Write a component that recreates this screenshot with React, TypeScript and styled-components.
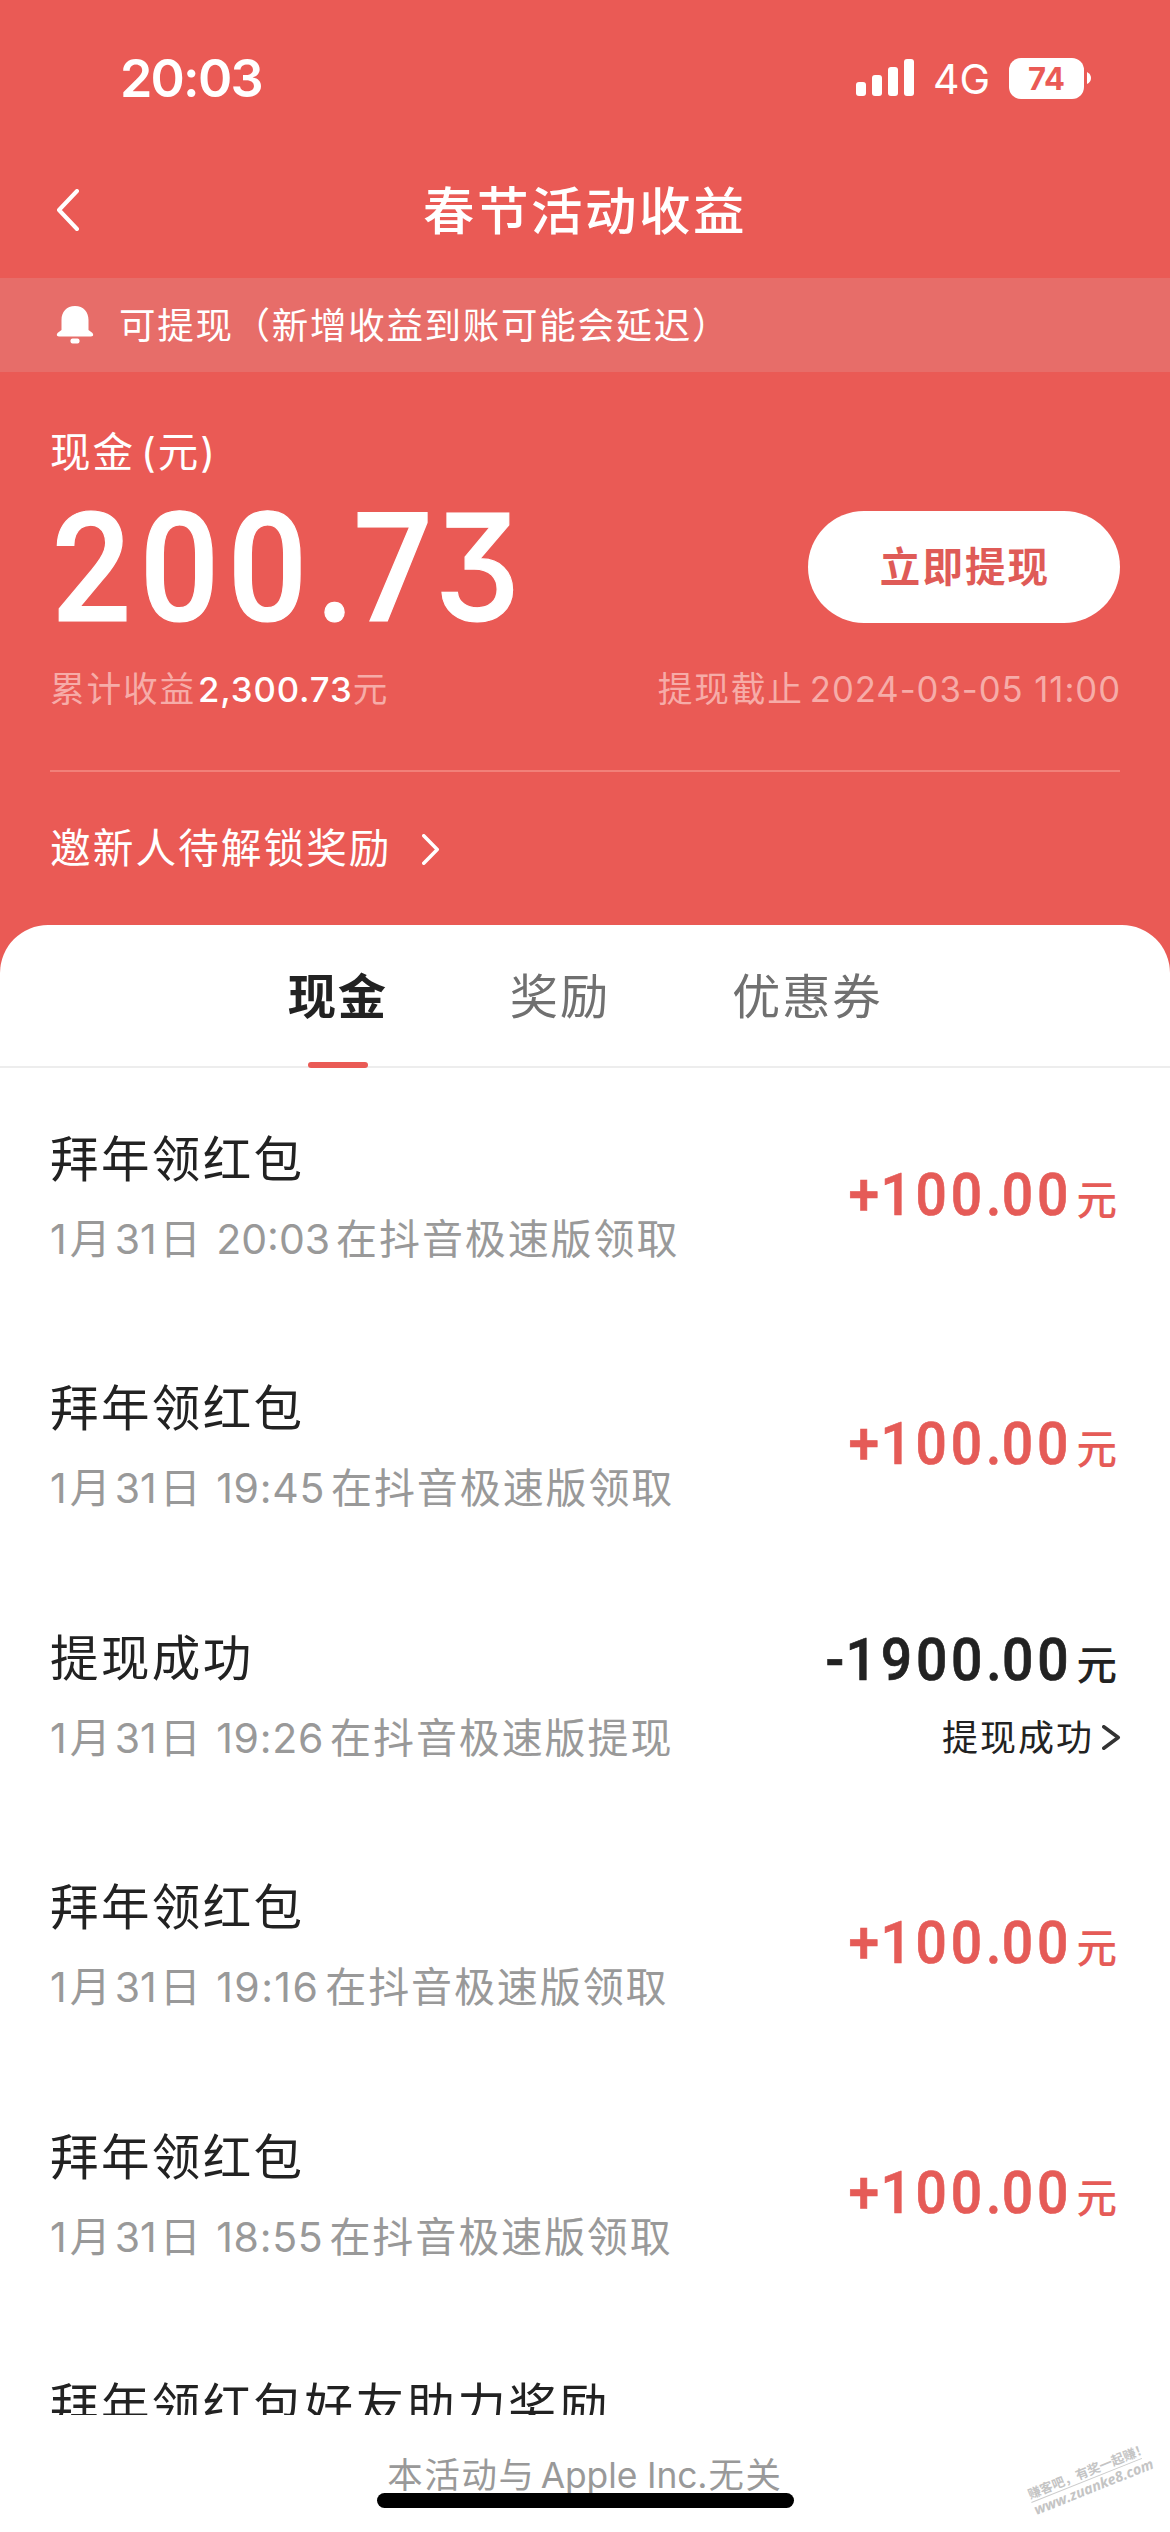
import React from "react";
import styled, { createGlobalStyle, css } from "styled-components";

const RED = "#ea5a55";
const TEXT_FONT = `Inter, "Noto Sans CJK SC", sans-serif`;
const NUM_FONT = `Roboto, "Noto Sans CJK SC", sans-serif`;

const GlobalStyle = createGlobalStyle`
  * { box-sizing: border-box; }
  body { margin: 0; background: ${RED}; font-family: ${TEXT_FONT}; }
`;

const Screen = styled.div`
  width: 1170px;
  height: 2532px;
  display: flex;
  flex-direction: column;
  overflow: hidden;
  background: ${RED};
  color: #fff;
  white-space: nowrap;
`;

const StatusBar = styled.header`
  height: 156px;
  flex: none;
  display: flex;
  align-items: center;
  justify-content: space-between;
  padding: 0 79px 0 120px;
`;

const Clock = styled.div`
  font-size: 52px;
  font-weight: 600;
  line-height: 60px;
  letter-spacing: -1.8px;
  padding-top: 1px;
`;

const StatusIcons = styled.div`
  display: flex;
  align-items: center;
`;

const Network = styled.span`
  font-size: 41px;
  line-height: 48px;
  margin: 2px 19px 0 18px;
`;

const Battery = styled.div`
  width: 75px;
  height: 41px;
  border-radius: 12px;
  background: #fff;
  color: ${RED};
  font-size: 31px;
  font-weight: 700;
  line-height: 42px;
  text-align: center;
`;

const NavBar = styled.nav`
  height: 122px;
  flex: none;
  display: grid;
  grid-template-columns: 1fr auto 1fr;
  align-items: center;
  padding: 0 56px 14px;
`;

const NavTitle = styled.h1`
  margin: 0;
  padding-top: 2px;
  font-size: 51.5px;
  font-weight: 500;
  line-height: 70px;
  letter-spacing: 2.5px;
`;

const Notice = styled.div`
  height: 94px;
  flex: none;
  display: flex;
  align-items: center;
  gap: 25px;
  padding-left: 56px;
  background: #e76d69;
  font-size: 36.5px;
  letter-spacing: 1.7px;
`;

const NoticeText = styled.span`
  padding-bottom: 4px;
`;

const Summary = styled.section`
  flex: none;
  height: 553px;
  padding: 56px 50px 0;
  display: flex;
  flex-direction: column;
`;

const Label = styled.div`
  font-size: 40.5px;
  line-height: 50px;
  letter-spacing: 2px;
`;

const Paren = styled.span`
  margin-left: ${(p: { $gap?: number }) => p.$gap ?? 0}px;
`;

const BalanceRow = styled.div`
  display: flex;
  align-items: center;
  justify-content: space-between;
  height: 112px;
  margin-top: 33px;
`;

const Balance = styled.div`
  padding: 4px 0 0 2px;
  font-family: ${NUM_FONT};
  font-size: 152px;
  font-weight: 500;
  -webkit-text-stroke: 1.2px #fff;
  line-height: 112px;
  letter-spacing: 9.2px;
  transform: scaleX(0.92);
  transform-origin: left center;
`;

const Dot = styled.span`
  letter-spacing: -1px;
`;

const FlatThree = styled.span`
  font-family: Inter, sans-serif;
  font-size: 148.5px;
  font-weight: 500;
  line-height: 1px;
  letter-spacing: 0;
  margin-left: -8px;
  font-feature-settings: "cv09";
`;

const WithdrawButton = styled.button`
  width: 312px;
  height: 112px;
  border: 0;
  border-radius: 56px;
  padding: 2px 0 0 2px;
  background: #fff;
  color: #df5b57;
  font: 700 40.5px/60px ${TEXT_FONT};
  letter-spacing: 2.1px;
`;

const MetaRow = styled.div`
  display: flex;
  justify-content: space-between;
  margin-top: 41px;
  font-size: 34.7px;
  line-height: 50px;
  letter-spacing: 1.8px;
  color: #f6aca8;
`;

const Total = styled.b`
  margin-left: 2px;
  color: #fff;
  font-weight: 500;
  letter-spacing: 0.9px;
`;

const Deadline = styled.span`
  margin: 0 -1px 0 6px;
  letter-spacing: 0.95px;
`;

const Rule = styled.hr`
  width: 100%;
  height: 2px;
  margin: 56px 0 0;
  border: 0;
  background: #f18079;
`;

const InviteLink = styled.a`
  display: flex;
  align-items: center;
  gap: 30px;
  margin-top: 46px;
  font-size: 40.7px;
  line-height: 62px;
  letter-spacing: 2px;
`;

const Card = styled.main`
  flex: 1;
  min-height: 0;
  display: flex;
  flex-direction: column;
  border-radius: 48px 48px 0 0;
  background: #fff;
  color: #222;
`;

const Tabs = styled.div`
  height: 143px;
  flex: none;
  display: flex;
  justify-content: center;
  gap: 122px;
  border-bottom: 2px solid #ededed;
`;

const Tab = styled.div<{ $active?: boolean }>`
  position: relative;
  height: 143px;
  padding-top: 37px;
  font-size: 48.3px;
  line-height: 70px;
  letter-spacing: 1.8px;
  color: #707070;
  ${(p) =>
    p.$active &&
    css`
      color: #222;
      font-weight: 700;
      &::after {
        content: "";
        position: absolute;
        left: 20px;
        bottom: 0;
        width: 60px;
        height: 6px;
        border-radius: 3px;
        background: ${RED};
      }
    `}
`;

const List = styled.ul`
  margin: 0;
  padding: 0;
  list-style: none;
  height: 1347px;
  overflow: hidden;
`;

const Item = styled.li`
  height: 249.5px;
  display: flex;
  justify-content: space-between;
  padding: 56.5px 53px 0 50px;
`;

const ItemTitle = styled.div`
  font-size: 48.5px;
  line-height: 70px;
  letter-spacing: 2.4px;
`;

const ItemDate = styled.div`
  margin-top: 14px;
  font-size: 41px;
  line-height: 60px;
  letter-spacing: 1.9px;
  color: #999;
`;

const Stamp = styled.span`
  letter-spacing: 0;
  margin-right: 6px;
`;

const DateUnit = styled.span`
  margin: 0 4px 0 3px;
`;

/* Inter's "1" is narrow, so times that contain it get wider tracking. */
const Time = styled.span<{ $ones: number }>`
  letter-spacing: ${(p) => p.$ones * 0.7}px;
`;

const AmountBox = styled.div<{ $detailed?: boolean }>`
  display: flex;
  flex-direction: column;
  align-items: flex-end;
  padding-top: ${(p) => (p.$detailed ? 1 : 35)}px;
`;

const Amount = styled.div<{ $out?: boolean }>`
  display: flex;
  align-items: baseline;
  gap: 4px;
  height: 70px;
  line-height: 70px;
  font-family: ${NUM_FONT};
  font-size: 60px;
  font-weight: 500;
  color: ${(p) => (p.$out ? "#222" : "#e55b57")};
`;

const Figure = styled.span`
  -webkit-text-stroke: 0.7px currentColor;
  letter-spacing: 4.1px;
  transform: scaleX(0.92);
  transform-origin: right center;
`;

const Sign = styled.span`
  letter-spacing: 1.5px;
`;

const FigureDot = styled.span`
  letter-spacing: 0.6px;
`;

const Unit = styled.span`
  font-size: 40.5px;
`;

const StatusLink = styled.div`
  display: flex;
  align-items: center;
  gap: 8px;
  margin: 16px -4px 0 0;
  font-size: 36px;
  line-height: 54px;
  letter-spacing: 2px;
`;

const Footer = styled.footer`
  position: relative;
  flex: 1;
  padding-top: 35px;
  text-align: center;
  font-size: 35.4px;
  line-height: 52px;
  letter-spacing: 1.7px;
  color: #999;
`;

const Latin = styled.span`
  letter-spacing: -0.1px;
  margin: 0 1px 0 5px;
`;

const HomeBar = styled.div`
  position: absolute;
  left: 377px;
  top: 78px;
  width: 417px;
  height: 15px;
  border-radius: 8px;
  background: #000;
`;

const Watermark = styled.div`
  position: absolute;
  left: 1027px;
  top: 48px;
  width: 119px;
  transform: rotate(-21.8deg);
  text-align: left;
  font: 700 12.8px/17px "Noto Sans CJK SC", sans-serif;
  letter-spacing: 0;
  color: #c4c4c4;
`;

const Site = styled.div`
  border-top: 1px solid #ccc;
  font: italic 700 14.4px/16px "Open Sans", sans-serif;
`;

const Signal = () => (
  <svg width="60" height="38" viewBox="0 0 60 38" fill="#fff">
    <rect x="1" y="23" width="10" height="14" rx="3" />
    <rect x="17" y="16" width="10" height="21" rx="3" />
    <rect x="33" y="8" width="10" height="29" rx="3" />
    <rect x="49" y="0" width="10" height="37" rx="3" />
  </svg>
);

const BatteryTip = () => (
  <svg width="7" height="14" viewBox="0 0 7 14" fill="#fff">
    <path d="M3 1Q7 3 7 7T3 13Z" />
  </svg>
);

const Bell = () => (
  <svg width="38" height="40" viewBox="0 0 38 40" fill="#fff">
    <path d="M19 1C10.500 1 5.500 7 5.500 15V25L1.500 28Q-0.500 31.500 3 31.500H35Q38.500 31.500 36.500 28L32.500 25V15C32.500 7 27.500 1 19 1Z" />
    <rect x="14.500" y="33.500" width="9" height="5" rx="2" />
  </svg>
);

type ChevronProps = { w: number; h: number; stroke: string; sw: number; left?: boolean };
const Chevron = ({ w, h, stroke, sw, left }: ChevronProps) => (
  <svg width={w} height={h} fill="none" stroke={stroke} strokeWidth={sw} strokeLinecap="round" strokeLinejoin="round">
    <path
      d={
        left
          ? `M${w - sw / 2} ${sw / 2}L${sw / 2 + 1} ${h / 2}L${w - sw / 2} ${h - sw / 2}`
          : `M${sw / 2} ${sw / 2}L${w - sw / 2 - 1} ${h / 2}L${sw / 2} ${h - sw / 2}`
      }
    />
  </svg>
);

type Entry = { title: string; time: string; action: string; amount: string; status?: string };

const entries: Entry[] = [
  { title: "拜年领红包", time: "20:03", action: "在抖音极速版领取", amount: "+100.00" },
  { title: "拜年领红包", time: "19:45", action: "在抖音极速版领取", amount: "+100.00" },
  { title: "提现成功", time: "19:26", action: "在抖音极速版提现", amount: "-1900.00", status: "提现成功" },
  { title: "拜年领红包", time: "19:16", action: "在抖音极速版领取", amount: "+100.00" },
  { title: "拜年领红包", time: "18:55", action: "在抖音极速版领取", amount: "+100.00" },
];

export default function App() {
  return (
    <Screen>
      <GlobalStyle />
      <StatusBar>
        <Clock>20:03</Clock>
        <StatusIcons>
          <Signal />
          <Network>4G</Network>
          <Battery>74</Battery>
          <BatteryTip />
        </StatusIcons>
      </StatusBar>
      <NavBar>
        <Chevron left w={23} h={42} stroke="#fff" sw={4} />
        <NavTitle>春节活动收益</NavTitle>
      </NavBar>
      <Notice>
        <Bell />
        <NoticeText>可提现（新增收益到账可能会延迟）</NoticeText>
      </Notice>
      <Summary>
        <Label>
          现金<Paren $gap={6}>(</Paren>元<Paren>)</Paren>
        </Label>
        <BalanceRow>
          <Balance>
            200<Dot>.</Dot>7<FlatThree>3</FlatThree>
          </Balance>
          <WithdrawButton>立即提现</WithdrawButton>
        </BalanceRow>
        <MetaRow>
          <span>
            累计收益<Total>2,300.73</Total>元
          </span>
          <span>
            提现截止<Deadline>2024-03-05 11:00</Deadline>
          </span>
        </MetaRow>
        <Rule />
        <InviteLink>
          邀新人待解锁奖励
          <Chevron w={18} h={31} stroke="#fff" sw={3.5} />
        </InviteLink>
      </Summary>
      <Card>
        <Tabs>
          <Tab $active>现金</Tab>
          <Tab>奖励</Tab>
          <Tab>优惠券</Tab>
        </Tabs>
        <List>
          {entries.map((e) => {
            const [whole, cents] = e.amount.slice(1).split(".");
            return (
              <Item key={e.time}>
                <div>
                  <ItemTitle>{e.title}</ItemTitle>
                  <ItemDate>
                    <Stamp>
                      1<DateUnit>月</DateUnit>31<DateUnit>日</DateUnit>{" "}
                      <Time $ones={e.time.split("1").length - 1}>{e.time}</Time>
                    </Stamp>
                    {e.action}
                  </ItemDate>
                </div>
                <AmountBox $detailed={!!e.status}>
                  <Amount $out={!!e.status}>
                    <Figure>
                      <Sign>{e.amount[0]}</Sign>
                      {whole}
                      <FigureDot>.</FigureDot>
                      {cents}
                    </Figure>
                    <Unit>元</Unit>
                  </Amount>
                  {e.status && (
                    <StatusLink>
                      {e.status}
                      <Chevron w={19} h={25} stroke="#333" sw={3.5} />
                    </StatusLink>
                  )}
                </AmountBox>
              </Item>
            );
          })}
          <Item>
            <ItemTitle>拜年领红包好友助力奖励</ItemTitle>
          </Item>
        </List>
        <Footer>
          本活动与<Latin>Apple Inc.</Latin>无关
          <HomeBar />
          <Watermark>
            赚客吧，有奖一起赚！
            <Site>www.zuanke8.com</Site>
          </Watermark>
        </Footer>
      </Card>
    </Screen>
  );
}
